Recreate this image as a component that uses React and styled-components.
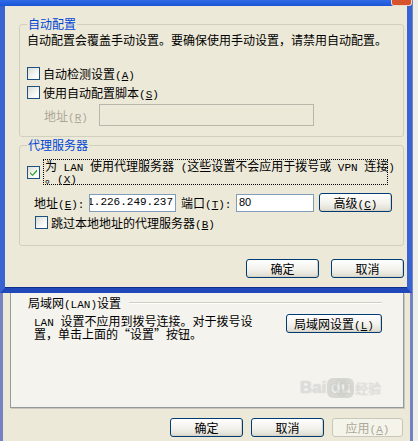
import React from "react";
import styled, { createGlobalStyle } from "styled-components";

const GlobalStyle = createGlobalStyle`
  html, body {
    margin: 0;
    padding: 0;
  }
  body {
    background: #efefea;
    font-family: "Noto Sans CJK SC", "Liberation Sans", sans-serif;
    font-size: 12px;
    color: #000;
  }
`;

const Screen = styled.div`
  position: relative;
  width: 418px;
  height: 441px;
  overflow: hidden;
`;

/* the Internet Options window underneath */
const OuterWindow = styled.div`
  box-sizing: border-box;
  width: 413px;
  height: 441px;
  padding-top: 293px;
  background: #ece9d8;
  border-left: 3px solid #7581c0;
  border-right: 3px solid #7581c0;
  display: flex;
  flex-direction: column;
`;

const TabPage = styled.div`
  box-sizing: border-box;
  margin-left: 7px;
  width: 394px;
  height: 115px;
  padding: 3px 21px 0 17px;
  background: #f4f3ee;
  border: 1px solid #919b9c;
  border-top: none;
  box-shadow: 1px 1px 0 #c9c8bf;
`;

const SectionHead = styled.div`
  display: flex;
  align-items: center;
  line-height: 14px;
`;

const HeadRule = styled.div`
  flex: 1;
  margin-left: 8px;
  height: 1px;
  background: #d0d0bf;
  border-bottom: 1px solid #fff;
`;

const SectionBody = styled.div`
  display: flex;
  align-items: flex-start;
  margin-top: 4px;
`;

const Note = styled.div`
  width: 222px;
  margin-left: 6px;
  line-height: 13px;
`;

const ButtonRow = styled.div`
  display: flex;
  justify-content: flex-end;
  gap: ${(p) => p.$gap || 8}px;
  margin-top: ${(p) => p.$top || 0}px;
  padding-right: ${(p) => p.$right || 0}px;
`;

const Button = styled.button`
  box-sizing: border-box;
  width: ${(p) => p.$w || 73}px;
  height: 19px;
  padding: 0;
  margin-left: ${(p) => (p.$auto ? "auto" : "0")};
  font-family: inherit;
  font-size: 12px;
  line-height: 15px;
  color: #000;
  border: 1px solid #003c74;
  border-radius: 3px;
  background: linear-gradient(#ffffff, #f2f1ec 55%, #e3e1d6 90%, #d6d0c5);
  box-shadow: inset -1px -1px 0 #d8d2c6;

  &:disabled {
    color: #aca899;
    border-color: #c9c7ba;
    background: #f5f4ea;
    box-shadow: none;
  }
`;

/* LAN settings dialog lying on top */
const LanDialog = styled.div`
  position: absolute;
  top: 0;
  left: 0;
  width: 412px;
  height: 293px;
  display: flex;
  flex-direction: column;
`;

const TitleStrip = styled.div`
  height: 6px;
  display: flex;
  justify-content: flex-end;
  background: linear-gradient(#2f6be6, #1b55d8);
  overflow: hidden;
`;

const CloseButton = styled.div`
  box-sizing: border-box;
  width: 21px;
  height: 6px;
  background: #d6532c;
  border: 1px solid #f2d4c8;
  border-top: none;
  border-radius: 0 0 3px 3px;
`;

const Frame = styled.div`
  flex: 1;
  box-sizing: border-box;
  padding: 12px 3px 0 14px;
  background: #ece9d8;
  border-left: 5px solid #3a63d2;
  border-right: 5px solid #3a63d2;
  border-bottom: 5px solid #2148b8;
  box-shadow: inset 0 -1px 0 #0f2c8e;
`;

const Group = styled.fieldset`
  box-sizing: border-box;
  width: 385px;
  margin: ${(p) => p.$top || 0}px 0 0 0;
  padding: 0 4px ${(p) => p.$bottom || 10}px 7px;
  border: 1px solid #d0d0bf;
  border-radius: 3px;
  min-inline-size: 0;
`;

const Legend = styled.legend`
  padding: 0 1px;
  line-height: 12px;
  color: #0046d5;
`;

const Description = styled.div`
  margin-top: 3px;
  line-height: 13px;
  white-space: nowrap;
`;

const CheckRow = styled.label`
  display: flex;
  align-items: center;
  gap: 3px;
  margin-top: ${(p) => p.$top || 0}px;
  margin-left: ${(p) => p.$indent || 0}px;
  line-height: 13px;
`;

const Box = styled.span`
  box-sizing: border-box;
  flex: none;
  width: 13px;
  height: 13px;
  border: 1px solid #1c5180;
  background: linear-gradient(135deg, #dcdcd5, #ffffff 80%);
  display: flex;
  align-items: center;
  justify-content: center;
`;

const FocusLabel = styled.span`
  box-sizing: border-box;
  width: 345px;
  padding: 0 1px;
  border: 1px dotted #000;
  line-height: 12px;
`;

const Line = styled.span`
  display: block;
  white-space: nowrap;
`;

const FieldRow = styled.div`
  display: flex;
  align-items: center;
  margin-top: ${(p) => p.$top || 0}px;
  margin-left: ${(p) => p.$indent || 0}px;
  line-height: 13px;
`;

const FieldLabel = styled.span`
  color: ${(p) => (p.$disabled ? "#aca899" : "#000")};
  width: ${(p) => p.$w}px;
  margin-left: ${(p) => p.$gap || 0}px;
  flex: none;
  white-space: nowrap;
`;

const TextBox = styled.div`
  box-sizing: border-box;
  flex: none;
  width: ${(p) => p.$w}px;
  height: ${(p) => p.$h || 18}px;
  padding: 0 2px;
  border: 1px solid ${(p) => (p.$disabled ? "#b9b7ab" : "#7f9db9")};
  background: ${(p) => (p.$disabled ? "#ece9d8" : "#fff")};
  display: flex;
  align-items: center;
  justify-content: ${(p) => (p.$end ? "flex-end" : "flex-start")};
  overflow: hidden;
  white-space: nowrap;
  font-family: ${(p) => (p.$mono ? '"Liberation Mono", monospace' : '"Liberation Sans", sans-serif')};
  font-size: 11px;
`;

const Lat = styled.span`
  font-family: "Liberation Mono", monospace;
  font-size: 11px;
  line-height: 0;
  white-space: pre;
`;

const Watermark = styled.div`
  position: absolute;
  left: 300px;
  top: 378px;
  display: flex;
  align-items: flex-end;
  font-family: "Liberation Sans", sans-serif;
  font-weight: bold;
  font-size: 17px;
  color: rgba(255, 255, 255, 0.55);
  text-shadow: 0 0 1px rgba(150, 150, 145, 0.7);
  pointer-events: none;
`;

const Paw = styled.svg`
  position: absolute;
  left: 30px;
  top: 0;
`;

const Du = styled.span`
  margin: 0 1px;
  padding: 0 3px;
  border-radius: 6px;
  background: rgba(175, 175, 170, 0.4);
  color: rgba(255, 255, 255, 0.8);
`;

const Jy = styled.span`
  font-family: "Noto Sans CJK SC", sans-serif;
  font-size: 13px;
  font-weight: normal;
  line-height: 20px;
`;

const Key = ({ k, tail = "" }) => (
  <Lat>
    (<u>{k}</u>){tail}
  </Lat>
);

const Check = ({ checked }) => (
  <Box>
    {checked && (
      <svg width="9" height="9" viewBox="0 0 9 9">
        <path d="M1 4 L3.5 6.5 L8 1.5 L8 3.5 L3.5 8 L1 5.5 Z" fill="#21a121" />
      </svg>
    )}
  </Box>
);

export default function App() {
  return (
    <Screen>
      <GlobalStyle />
      <OuterWindow>
        <TabPage>
          <SectionHead>
            <span>
              局域网<Lat>(LAN)</Lat>设置
            </span>
            <HeadRule />
          </SectionHead>
          <SectionBody>
            <Note>
              <Lat>LAN </Lat>设置不应用到拨号连接。对于拨号设置，单击上面的“设置”按钮。
            </Note>
            <Button $w={96} $auto>
              局域网设置<Key k="L" />
            </Button>
          </SectionBody>
        </TabPage>
        <ButtonRow $top={10} $right={7}>
          <Button>确定</Button>
          <Button>取消</Button>
          <Button $w={71} disabled>
            应用<Key k="A" />
          </Button>
        </ButtonRow>
      </OuterWindow>

      <Watermark>
        <Paw width="22" height="20" viewBox="0 0 22 20">
          <g fill="rgba(205,205,200,0.5)">
            <ellipse cx="5" cy="9" rx="2.5" ry="3" />
            <ellipse cx="9" cy="4" rx="2.5" ry="3" />
            <ellipse cx="14" cy="4" rx="2.5" ry="3" />
            <ellipse cx="18" cy="9" rx="2.5" ry="3" />
            <ellipse cx="11.5" cy="15" rx="5" ry="4" />
          </g>
        </Paw>
        <span>Bai</span>
        <Du>du</Du>
        <Jy>经验</Jy>
      </Watermark>

      <LanDialog>
        <TitleStrip>
          <CloseButton />
        </TitleStrip>
        <Frame>
          <Group>
            <Legend>自动配置</Legend>
            <Description>自动配置会覆盖手动设置。要确保使用手动设置，请禁用自动配置。</Description>
            <CheckRow $top={21}>
              <Check />
              <span>
                自动检测设置<Key k="A" />
              </span>
            </CheckRow>
            <CheckRow $top={6}>
              <Check />
              <span>
                使用自动配置脚本<Key k="S" />
              </span>
            </CheckRow>
            <FieldRow $top={5} $indent={17}>
              <FieldLabel $disabled $w={55}>
                地址<Key k="R" />
              </FieldLabel>
              <TextBox $w={215} $h={22} $disabled />
            </FieldRow>
          </Group>

          <Group $top={2} $bottom={16}>
            <Legend>代理服务器</Legend>
            <CheckRow $top={8}>
              <Check checked />
              <FocusLabel>
                <Line>
                  为<Lat> LAN </Lat>使用代理服务器<Lat> (</Lat>这些设置不会应用于拨号或<Lat> VPN </Lat>连接<Lat>)</Lat>
                </Line>
                <Line>
                  。<Key k="X" />
                </Line>
              </FocusLabel>
            </CheckRow>
            <FieldRow $top={8} $indent={7}>
              <FieldLabel $w={55}>
                地址<Key k="E" tail=":" />
              </FieldLabel>
              <TextBox $w={87} $mono $end>
                01.226.249.237
              </TextBox>
              <FieldLabel $w={55} $gap={5}>
                端口<Key k="T" tail=":" />
              </FieldLabel>
              <TextBox $w={78}>80</TextBox>
              <Button style={{ marginLeft: 5 }}>
                高级<Key k="C" />
              </Button>
            </FieldRow>
            <CheckRow $top={4} $indent={8}>
              <Check />
              <span>
                跳过本地地址的代理服务器<Key k="B" />
              </span>
            </CheckRow>
          </Group>

          <ButtonRow $top={13} $gap={12} $right={0}>
            <Button>确定</Button>
            <Button>取消</Button>
          </ButtonRow>
        </Frame>
      </LanDialog>
    </Screen>
  );
}
